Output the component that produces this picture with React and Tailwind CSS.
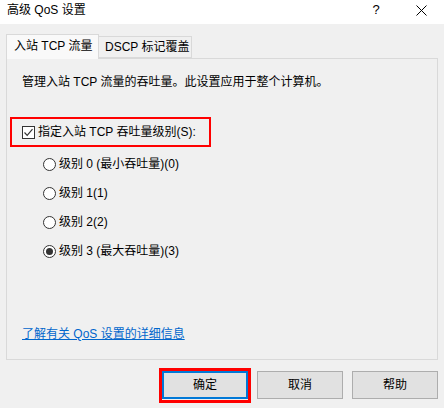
import { useState } from 'react'

const levels = [
  { id: 0, label: '级别 0 (最小吞吐量)(0)' },
  { id: 1, label: '级别 1(1)' },
  { id: 2, label: '级别 2(2)' },
  { id: 3, label: '级别 3 (最大吞吐量)(3)' }
]

function Radio({ checked }) {
  return (
    <span className="flex h-[13px] w-[13px] shrink-0 items-center justify-center rounded-full border border-[#333] bg-white">
      {checked && <span className="h-[7px] w-[7px] rounded-full bg-[#333]" />}
    </span>
  )
}

export default function App() {
  const [level, setLevel] = useState(3)
  const [limit, setLimit] = useState(true)

  return (
    <div
      className="flex h-[408px] w-[444px] flex-col overflow-hidden bg-[#f0f0f0] text-[12px] leading-[16px] text-black"
      style={{ fontFamily: '"Liberation Sans", "Noto Sans CJK SC", sans-serif' }}
    >
      {/* Title bar */}
      <div className="flex h-[24px] shrink-0 items-center bg-white pl-[7px]">
        <span className="-mt-[4px]">高级 QoS 设置</span>
        <span className="ml-auto -mt-[4px] w-[10px] text-center text-[13px]">?</span>
        <svg className="ml-[35px] mr-[17px] -mt-[4px]" width="11" height="11" viewBox="0 0 11 11">
          <path d="M0.5 0.5 L10.5 10.5 M10.5 0.5 L0.5 10.5" stroke="#000" strokeWidth="1" />
        </svg>
      </div>

      {/* Tabs */}
      <div className="mt-[10px] flex items-end pl-[6px]">
        <div className="relative z-10 -mb-px flex h-[25px] w-[93px] items-start border border-b-0 border-[#d9d9d9] bg-[#f9f9f9] pl-[7px] pt-[3px]">
          入站 TCP 流量
        </div>
        <div className="flex h-[22px] w-[93px] items-start border border-l-0 border-[#d9d9d9] bg-[#f0f0f0] pl-[6px] pt-[2px]">
          DSCP 标记覆盖
        </div>
      </div>

      {/* Panel */}
      <div className="mx-[6px] flex h-[302px] flex-col border border-[#d9d9d9] bg-[#f0f0f0] pb-[17px] pl-[15px]">
        <p className="mt-[15px]">管理入站 TCP 流量的吞吐量。此设置应用于整个计算机。</p>

        <div
          className="-ml-[12px] mt-[27px] flex h-[30px] w-[201px] cursor-default items-center border-2 border-[#ff0000] pl-[10px]"
          onClick={() => setLimit(!limit)}
        >
          <span className="flex h-[13px] w-[13px] shrink-0 items-center justify-center border border-[#333] bg-white">
            {limit && (
              <svg width="11" height="11" viewBox="0 0 11 11">
                <path d="M1.5 5.5 L4.2 8.3 L9.5 2.2" fill="none" stroke="#333" strokeWidth="1.2" />
              </svg>
            )}
          </span>
          <span className="ml-[3px]">指定入站 TCP 吞吐量级别(S):</span>
        </div>

        <div className="ml-[21px] mt-[9px] flex flex-col gap-[13px]">
          {levels.map(l => (
            <div key={l.id} className="flex h-[16px] cursor-default items-center" onClick={() => setLevel(l.id)}>
              <Radio checked={level === l.id} />
              <span className="ml-[3px]">{l.label}</span>
            </div>
          ))}
        </div>

        <a href="#" className="mt-auto self-start text-[#0066cc] underline">
          了解有关 QoS 设置的详细信息
        </a>
      </div>

      {/* Buttons */}
      <div className="mt-[11px] flex justify-end gap-[9px] pr-[6px]">
        <div className="relative">
          <button className="h-[28px] w-[86px] border-2 border-[#0078d7] bg-[#e1e1e1]">确定</button>
          <span className="pointer-events-none absolute -inset-[3px] -bottom-[4px] border-[3px] border-[#ff0000]" />
        </div>
        <button className="h-[28px] w-[86px] border border-[#adadad] bg-[#e1e1e1]">取消</button>
        <button className="h-[28px] w-[86px] border border-[#adadad] bg-[#e1e1e1]">帮助</button>
      </div>
    </div>
  )
}
